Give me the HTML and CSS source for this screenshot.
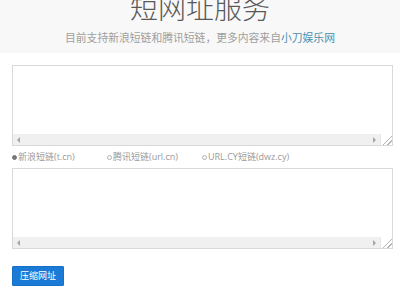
FILE: index.html
```html
<!DOCTYPE html>
<html lang="zh-CN">
<head>
<meta charset="utf-8">
<title>短网址服务</title>
<link rel="stylesheet" href="styles.css">
</head>
<body>
<header class="hero">
  <h1 class="title">短网址服务</h1>
  <p class="subtitle">目前支持新浪短链和腾讯短链，更多内容来自<a class="link" href="#">小刀娱乐网</a></p>
</header>
<main class="content">
  <div class="area">
    <textarea class="area-input"></textarea>
    <div class="hscroll">
      <span class="arrow arrow-left"></span>
      <span class="track"></span>
      <span class="arrow arrow-right"></span>
      <span class="grip"></span>
    </div>
  </div>
  <div class="radios">
    <label class="radio"><span class="dot checked"></span>新浪短链(t.cn)</label>
    <label class="radio"><span class="dot"></span>腾讯短链(url.cn)</label>
    <label class="radio"><span class="dot"></span>URL.CY短链(dwz.cy)</label>
  </div>
  <div class="area">
    <textarea class="area-input"></textarea>
    <div class="hscroll">
      <span class="arrow arrow-left"></span>
      <span class="track"></span>
      <span class="arrow arrow-right"></span>
      <span class="grip"></span>
    </div>
  </div>
  <div class="actions">
    <button class="btn" type="button">压缩网址</button>
  </div>
</main>
</body>
</html>
```
FILE: styles.css
```css
* { box-sizing: border-box; }
html, body { margin: 0; padding: 0; background: #fff; }
body {
  font-family: "Open Sans", "Noto Sans CJK SC", sans-serif;
  color: #666;
  overflow: hidden;
}
.hero {
  background: #f8f8f8;
  height: 53px;
  text-align: center;
  overflow: hidden;
}
.title {
  margin: -7px 0 0;
  font-family: "Noto Sans CJK SC", sans-serif;
  font-weight: 300;
  font-size: 28px;
  line-height: 28px;
  color: #595959;
}
.subtitle {
  margin: 11px 0 0;
  font-family: "Noto Sans CJK SC", sans-serif;
  font-size: 10.8px;
  line-height: 11px;
  color: #a0a0a0;
}
.link { color: #4a8fb0; text-decoration: none; }
.content {
  padding: 12px 8px 0 12px;
}
.area {
  width: 381px;
  border: 1px solid #d9d9d9;
  display: flex;
  flex-direction: column;
  background: #fff;
}
.area-input {
  display: block;
  height: 68px;
  border: 0;
  resize: none;
  outline: none;
  padding: 0;
  margin: 0;
  background: #fff;
}
.hscroll {
  height: 11px;
  display: flex;
  align-items: center;
  background: #f0f0f0;
}
.arrow {
  width: 11px;
  height: 11px;
  display: flex;
  align-items: center;
  justify-content: center;
}
.arrow::before {
  content: "";
  border-top: 3px solid transparent;
  border-bottom: 3px solid transparent;
}
.arrow-left::before { border-right: 3px solid #a6a6a6; }
.arrow-right::before { border-left: 3px solid #a6a6a6; }
.track { flex: 1; }
.grip {
  width: 12px;
  height: 11px;
  background: #fff;
  background-image: linear-gradient(135deg, transparent 55%, #b5b5b5 55%, #b5b5b5 62%, transparent 62%, transparent 75%, #b5b5b5 75%, #b5b5b5 82%, transparent 82%);
  border-left: 1px solid #e6e6e6;
}
.radios {
  display: flex;
  height: 22px;
  align-items: center;
}
.radio {
  width: 95px;
  display: flex;
  align-items: center;
  font-size: 9px;
  line-height: 22px;
  color: #9a9a9a;
  white-space: nowrap;
}
.dot {
  width: 5px;
  height: 5px;
  border-radius: 50%;
  border: 1px solid #b0b0b0;
  background: #fff;
  margin-right: 1px;
  flex: none;
}
.dot.checked { background: #777; border-color: #777; }
.actions {
  padding-top: 13px;
}
.btn {
  width: 52px;
  height: 20px;
  border: 1px solid #1670c8;
  border-radius: 1px;
  padding: 0;
  background: #1b7ad6;
  color: #fff;
  font-family: "Noto Sans CJK SC", sans-serif;
  font-size: 9px;
  line-height: 18px;
}
```
